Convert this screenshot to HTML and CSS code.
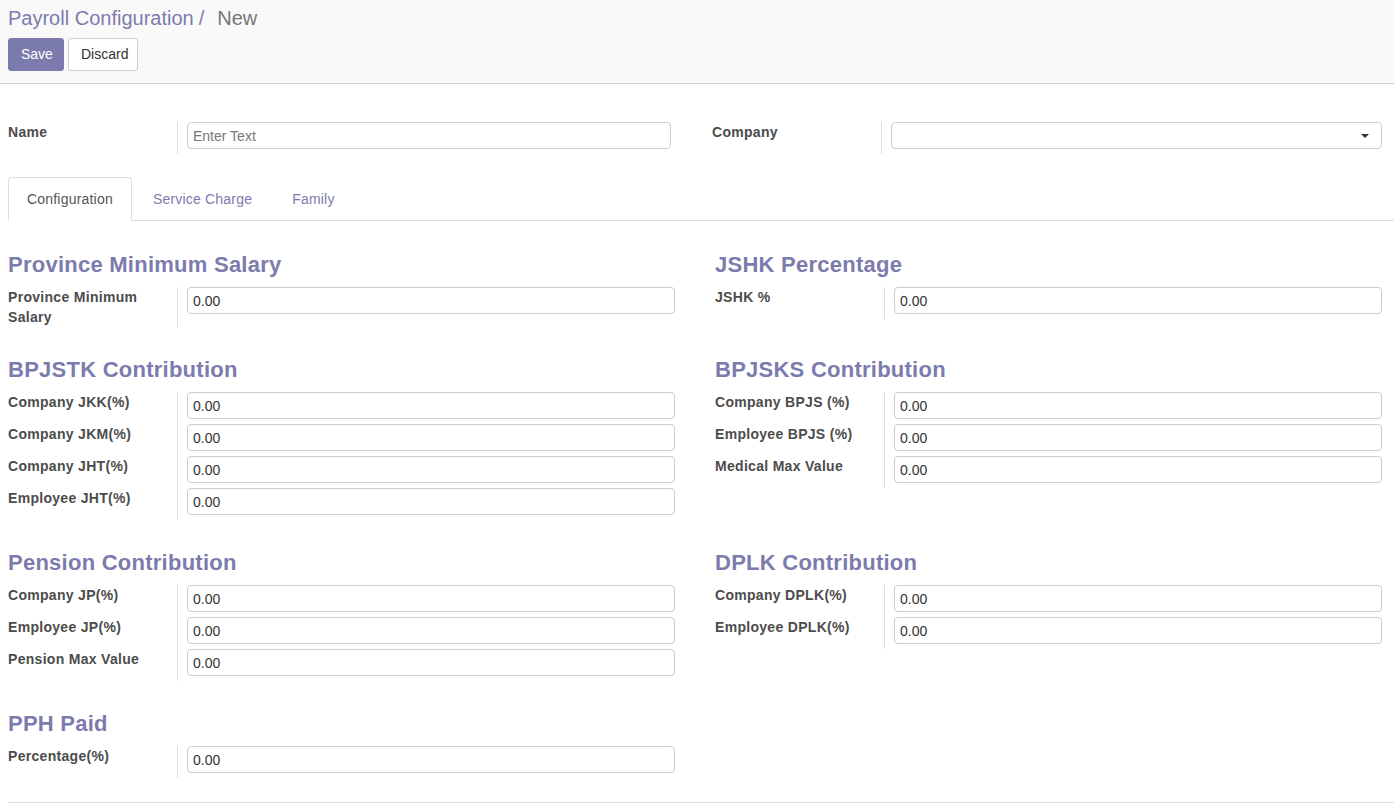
FILE: index.html
```html
<!DOCTYPE html>
<html lang="en">
<head>
<meta charset="utf-8">
<title>Payroll Configuration / New</title>
<link rel="stylesheet" href="styles.css">
</head>
<body>
<header class="control-panel">
  <div class="breadcrumb">
    <span class="crumb">Payroll Configuration</span><span class="crumb-sep">/</span><span class="crumb-current">New</span>
  </div>
  <div class="buttons">
    <button class="btn btn-primary" type="button">Save</button>
    <button class="btn btn-secondary" type="button">Discard</button>
  </div>
</header>

<main class="sheet">
  <div class="top-row">
    <div class="group">
      <label class="lbl">Name</label>
      <div class="val"><input class="inp" type="text" placeholder="Enter Text"></div>
    </div>
    <div class="group">
      <label class="lbl">Company</label>
      <div class="val"><div class="inp select"></div></div>
    </div>
  </div>

  <div class="notebook">
    <ul class="tabs">
      <li class="tab active">Configuration</li>
      <li class="tab">Service Charge</li>
      <li class="tab">Family</li>
    </ul>
    <div class="tab-content">
      <div class="pair">
        <section class="col">
          <h2 class="title">Province Minimum Salary</h2>
          <div class="group">
            <label class="lbl">Province Minimum Salary</label>
            <div class="val"><input class="inp" type="text" value="0.00"></div>
          </div>
        </section>
        <section class="col">
          <h2 class="title">JSHK Percentage</h2>
          <div class="group">
            <label class="lbl">JSHK %</label>
            <div class="val"><input class="inp" type="text" value="0.00"></div>
          </div>
        </section>
      </div>

      <div class="pair">
        <section class="col">
          <h2 class="title">BPJSTK Contribution</h2>
          <div class="group">
            <label class="lbl">Company JKK(%)</label>
            <div class="val"><input class="inp" type="text" value="0.00"></div>
            <label class="lbl">Company JKM(%)</label>
            <div class="val"><input class="inp" type="text" value="0.00"></div>
            <label class="lbl">Company JHT(%)</label>
            <div class="val"><input class="inp" type="text" value="0.00"></div>
            <label class="lbl">Employee JHT(%)</label>
            <div class="val"><input class="inp" type="text" value="0.00"></div>
          </div>
        </section>
        <section class="col">
          <h2 class="title">BPJSKS Contribution</h2>
          <div class="group">
            <label class="lbl">Company BPJS (%)</label>
            <div class="val"><input class="inp" type="text" value="0.00"></div>
            <label class="lbl">Employee BPJS (%)</label>
            <div class="val"><input class="inp" type="text" value="0.00"></div>
            <label class="lbl">Medical Max Value</label>
            <div class="val"><input class="inp" type="text" value="0.00"></div>
          </div>
        </section>
      </div>

      <div class="pair">
        <section class="col">
          <h2 class="title">Pension Contribution</h2>
          <div class="group">
            <label class="lbl">Company JP(%)</label>
            <div class="val"><input class="inp" type="text" value="0.00"></div>
            <label class="lbl">Employee JP(%)</label>
            <div class="val"><input class="inp" type="text" value="0.00"></div>
            <label class="lbl">Pension Max Value</label>
            <div class="val"><input class="inp" type="text" value="0.00"></div>
          </div>
        </section>
        <section class="col">
          <h2 class="title">DPLK Contribution</h2>
          <div class="group">
            <label class="lbl">Company DPLK(%)</label>
            <div class="val"><input class="inp" type="text" value="0.00"></div>
            <label class="lbl">Employee DPLK(%)</label>
            <div class="val"><input class="inp" type="text" value="0.00"></div>
          </div>
        </section>
      </div>

      <div class="pair">
        <section class="col">
          <h2 class="title">PPH Paid</h2>
          <div class="group">
            <label class="lbl">Percentage(%)</label>
            <div class="val"><input class="inp" type="text" value="0.00"></div>
          </div>
        </section>
        <section class="col"></section>
      </div>
    </div>
  </div>
</main>
</body>
</html>
```

FILE: styles.css
```css
html, body {
  margin: 0;
  padding: 0;
  background: #ffffff;
  font-family: "Liberation Sans", Arial, sans-serif;
  font-size: 14px;
  color: #4c4c4c;
}

/* ---------- control panel ---------- */
.control-panel {
  background: #f9f9f9;
  border-bottom: 1px solid #cfcfcf;
  padding: 6px 8px 12px 8px;
}

.breadcrumb {
  font-size: 20px;
  line-height: 24px;
  height: 24px;
  white-space: nowrap;
}

.crumb {
  color: #7c7bad;
}

.crumb-sep {
  color: #7c7bad;
  margin-left: 5px;
}

.crumb-current {
  color: #777777;
  margin-left: 13px;
}

.buttons {
  margin-top: 8px;
  display: flex;
  gap: 4px;
}

.btn {
  font-family: "Liberation Sans", Arial, sans-serif;
  font-size: 14px;
  height: 33px;
  line-height: 19px;
  border-radius: 3px;
  padding: 6px 12px;
  cursor: pointer;
}

.btn-primary {
  background: #7c7bad;
  color: #ffffff;
  border: 1px solid #7c7bad;
  width: 56px;
}

.btn-secondary {
  background: #ffffff;
  color: #333333;
  border: 1px solid #cccccc;
  width: 70px;
}

/* ---------- sheet ---------- */
.sheet {
  padding: 38px 0 0 8px;
}

.top-row {
  display: grid;
  grid-template-columns: 663px 670px;
  column-gap: 41px;
  padding-right: 12px;
}

.group {
  display: grid;
  grid-template-columns: 169px 1fr;
}

.lbl {
  font-weight: bold;
  font-size: 14px;
  line-height: 20px;
  letter-spacing: 0.3px;
  color: #4c4c4c;
  padding-right: 8px;
}

.val {
  border-left: 1px solid #dedede;
  padding: 0 0 5px 9px;
}

.inp {
  display: block;
  box-sizing: border-box;
  width: 100%;
  height: 27px;
  margin: 0;
  border: 1px solid #cccccc;
  border-radius: 4px;
  padding: 1px 5px 0 5px;
  font-family: "Liberation Sans", Arial, sans-serif;
  font-size: 14px;
  color: #333333;
  background: #ffffff;
  outline: none;
}

.inp::placeholder {
  color: #777777;
}

.select {
  position: relative;
}

.select::after {
  content: "";
  position: absolute;
  right: 12px;
  top: 11px;
  border-left: 4px solid transparent;
  border-right: 4px solid transparent;
  border-top: 4px solid #333333;
}

/* ---------- notebook ---------- */
.notebook {
  margin-top: 23px;
}

.tabs {
  list-style: none;
  margin: 0;
  padding: 0;
  display: flex;
  border-bottom: 1px solid #dddddd;
}

.tab {
  font-size: 14px;
  line-height: 22px;
  letter-spacing: 0.2px;
  padding: 10px 18px;
  margin-right: 2px;
  margin-bottom: -1px;
  color: #7c7bad;
  border: 1px solid transparent;
  border-radius: 4px 4px 0 0;
}

.tab.active {
  color: #555555;
  background: #ffffff;
  border-color: #dddddd #dddddd #ffffff #dddddd;
}

.tab-content {
  padding: 1px 12px 24px 0;
  border-bottom: 1px solid #dddddd;
}

.pair {
  display: grid;
  grid-template-columns: 667px 667px;
  column-gap: 40px;
}

.title {
  margin: 30px 0 9px 0;
  font-size: 22px;
  line-height: 26px;
  font-weight: bold;
  letter-spacing: 0.25px;
  color: #7c7bad;
}
```
